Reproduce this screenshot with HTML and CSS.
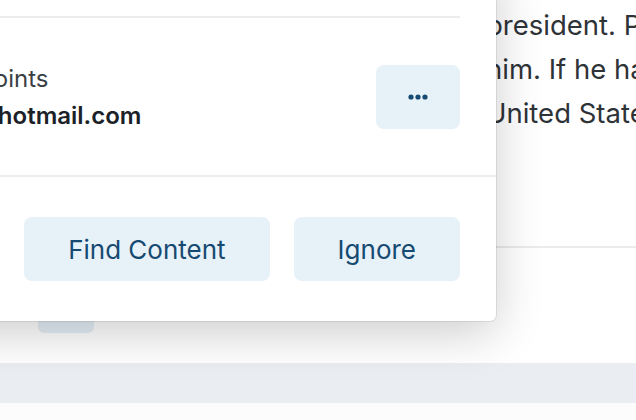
FILE: index.html
```html
<!DOCTYPE html>
<html lang="en">
<head>
<meta charset="utf-8">
<title>Report actions</title>
<link rel="stylesheet" href="styles.css">
</head>
<body>
<div class="page">
  <section class="article">
    <p class="line">president. Please note that</p>
    <p class="line">him. If he had been elected</p>
    <p class="line">United States in the years</p>
  </section>
  <div class="toolbar">
    <button class="tool-btn" type="button" aria-label="Reply"></button>
  </div>
  <div class="footer-band"></div>

  <div class="popover" role="dialog">
    <div class="prev-item"></div>
    <div class="item">
      <div class="item-text">
        <div class="item-meta">Reported content · 12 points</div>
        <div class="item-email">daniel.whitmore1984@hotmail.com</div>
      </div>
      <button class="more-btn" type="button" aria-label="More">
        <svg width="22" height="6" viewBox="0 0 22 6"><circle cx="4" cy="3" r="2.6" fill="#174a72"/><circle cx="11" cy="3" r="2.6" fill="#174a72"/><circle cx="18" cy="3" r="2.6" fill="#174a72"/></svg>
      </button>
    </div>
    <div class="actions">
      <button class="action-btn" type="button">Find Content</button>
      <button class="action-btn" type="button">Ignore</button>
    </div>
  </div>
</div>
</body>
</html>
```

FILE: styles.css
```css
* { box-sizing: border-box; }
html, body { margin: 0; padding: 0; }
body {
  width: 636px;
  height: 420px;
  overflow: hidden;
  background: #fcfcfc;
  font-family: "Inter", "Noto Sans", sans-serif;
}
.page {
  position: relative;
  width: 636px;
  height: 420px;
  background: #fcfcfc;
}
.article {
  height: 248px;
  padding: 3px 0 0 486px;
  background: #ffffff;
  border-bottom: 2px solid #ebebeb;
  overflow: hidden;
}
.line {
  margin: 0;
  font-size: 27.5px;
  line-height: 44px;
  color: #2e3338;
  white-space: nowrap;
  overflow: hidden;
}
.toolbar {
  height: 115px;
  padding: 26px 0 0 38px;
  background: #ffffff;
}
.tool-btn {
  display: block;
  width: 56px;
  height: 59px;
  border: 0;
  border-radius: 6px;
  background: #e6eff7;
  padding: 0;
}
.footer-band {
  height: 40px;
  background: #eaedf1;
}
.popover {
  position: absolute;
  left: -312px;
  top: -40px;
  width: 808px;
  background: #ffffff;
  border-radius: 6px;
  box-shadow: 0 0 0 1px rgba(0, 0, 0, 0.08), 0 12px 48px rgba(0, 0, 0, 0.2);
  z-index: 2;
}
.prev-item {
  height: 58px;
  margin: 0 36px 0 40px;
  border-bottom: 2px solid #ececec;
}
.item {
  display: flex;
  align-items: center;
  justify-content: space-between;
  margin: 0 36px 0 43px;
  padding: 47px 0 46px;
}
.item-text {
  display: flex;
  flex-direction: column;
  gap: 10px;
  font-size: 24px;
  line-height: 27px;
  white-space: nowrap;
}
.item-meta { color: #3a3f45; }
.item-email { color: #1c2128; font-weight: 600; }
.more-btn {
  display: flex;
  align-items: center;
  justify-content: center;
  width: 84px;
  height: 64px;
  border: 0;
  border-radius: 8px;
  background: #e7f1f8;
  padding: 0;
}
.actions {
  display: flex;
  justify-content: flex-end;
  gap: 24px;
  padding: 40px 36px;
  border-top: 2px solid #ececec;
}
.action-btn {
  height: 64px;
  padding: 0 44px;
  border: 0;
  border-radius: 8px;
  background: #e7f1f8;
  color: #164a71;
  font-family: "Inter", "Noto Sans", sans-serif;
  font-size: 26px;
  font-weight: 400;
}
```
